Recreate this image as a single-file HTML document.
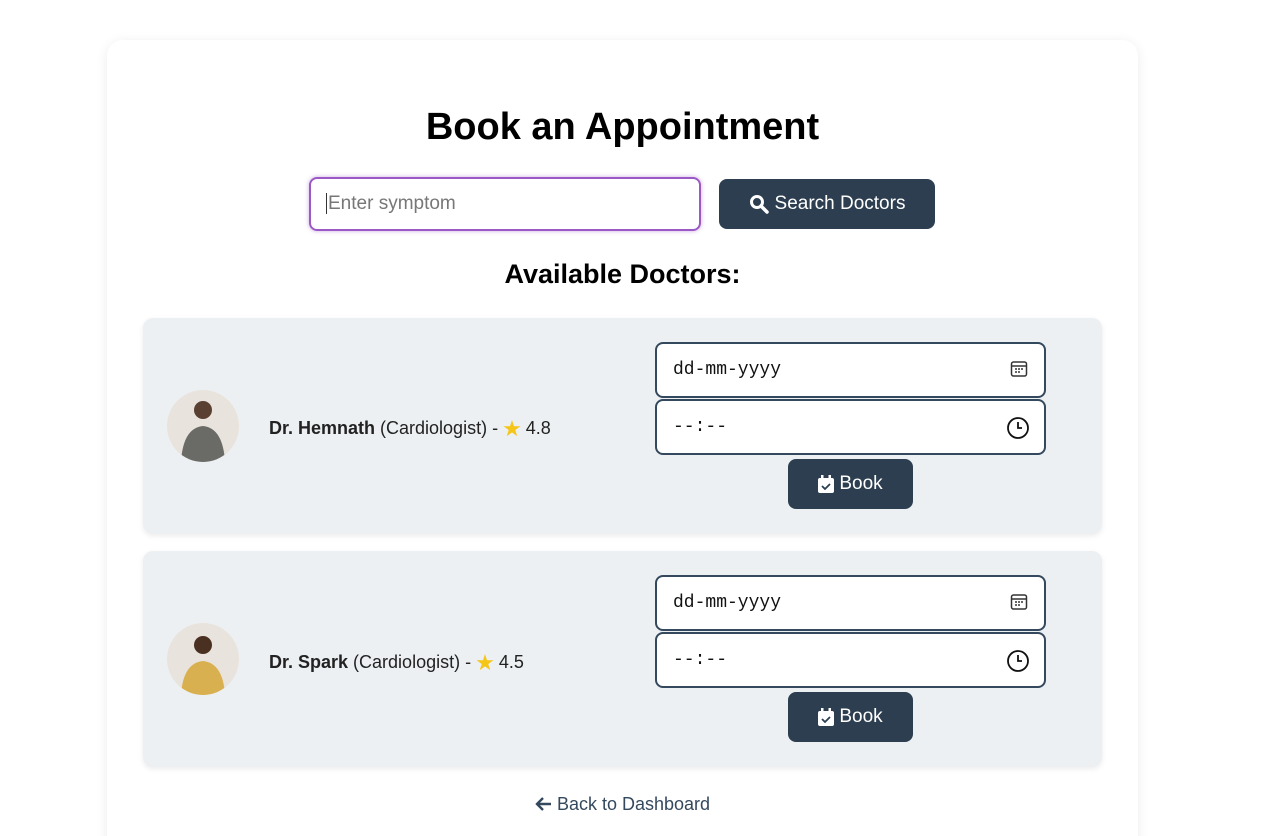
<!DOCTYPE html>
<html style="overflow:hidden;height:836px"><head><style>
body{margin:0;background:#fff;font-family:"Liberation Sans",sans-serif;width:1280px;height:836px;overflow:hidden;position:relative}
.main{position:absolute;left:107px;top:40px;width:1031px;height:830px;background:#fff;border-radius:16px;box-shadow:0 2px 12px rgba(0,0,0,.08)}
.ctr{position:absolute;left:107px;width:1031px;text-align:center;margin:0}
h1{top:106px;font-size:38px;font-weight:bold;color:#000}
.sinput{position:absolute;left:309px;top:177px;border:2px solid #9b59c6;border-radius:8px;box-shadow:0 0 4px rgba(155,89,198,.5);box-sizing:border-box;width:392px;height:54px;font-size:19px;color:#777;padding:14px 15px}
.sbtn{position:absolute;left:719px;top:179px;width:216px;height:50px;background:#2c3e50;border-radius:8px;color:#fff;font-size:19px;display:flex;align-items:center;justify-content:center;gap:6px}
h2{top:259px;font-size:27px;font-weight:bold}
.card{position:absolute;left:143px;width:959px;height:216px;background:#ecf0f2;border-radius:10px;box-shadow:0 2px 6px rgba(0,0,0,.08)}
.av{position:absolute;left:24px;width:72px;height:72px;border-radius:50%;background:#e9e3dd;overflow:hidden}
.name{position:absolute;left:126px;font-size:18px;color:#222}
.star{color:#f5c518;font-size:22px;vertical-align:-2px;margin:0 4px}
.inp{position:absolute;left:512px;width:391px;height:56px;background:#fff;border:2px solid #34495e;border-radius:8px;box-sizing:border-box;font-family:"Liberation Mono",monospace;font-size:18px;padding:16px 16px;color:#111}
.inp svg{position:absolute;right:16px;top:16px}
.bk{position:absolute;left:645px;width:125px;height:50px;background:#2c3e50;border-radius:8px;color:#fff;font-size:19px;display:flex;align-items:center;justify-content:center;gap:5px}
.back{top:794px;font-size:18px;color:#34495e}
</style></head><body>
<div class="main"></div>
<h1 class="ctr">Book an Appointment</h1>
<div class="sinput"><span style="border-left:1px solid #333;padding-left:1px">Enter symptom</span></div>
<div class="sbtn"><svg width="20" height="20" viewBox="0 0 20 20"><circle cx="8" cy="8" r="5.5" fill="none" stroke="#fff" stroke-width="3"/><path d="M12 12l6 6" stroke="#fff" stroke-width="3.5" stroke-linecap="round"/></svg>Search Doctors</div>
<h2 class="ctr">Available Doctors:</h2>

<div class="card" style="top:318px">
<div class="av" style="top:72px"><svg width="72" height="72"><circle cx="36" cy="20" r="9" fill="#5a4030"/><path d="M14 72 Q16 38 36 36 Q56 38 58 72Z" fill="#6a6a66"/></svg></div>
<div class="name" style="top:98px"><b>Dr. Hemnath</b> (Cardiologist) -<span class="star">★</span>4.8</div>
<div class="inp" style="top:24px">dd-mm-yyyy<svg width="18" height="18" viewBox="0 0 18 18"><rect x="1.5" y="2" width="15" height="14" rx="2" fill="none" stroke="#333" stroke-width="1.5"/><path d="M2 6h14" stroke="#333" stroke-width="1.5"/><path d="M5 9h2M8 9h2M11 9h2M5 12h2M8 12h2" stroke="#333" stroke-width="1.5"/></svg></div>
<div class="inp" style="top:81px">--:--<svg width="24" height="24" viewBox="0 0 24 24" style="top:15px;right:14px"><circle cx="12" cy="12" r="10" fill="none" stroke="#111" stroke-width="1.8"/><path d="M12 6v6h4" fill="none" stroke="#111" stroke-width="1.8"/></svg></div>
<div class="bk" style="top:141px"><svg width="16" height="18" viewBox="0 0 16 18"><rect x="0" y="3" width="16" height="15" rx="2" fill="#fff"/><rect x="3" y="0" width="2.5" height="5" fill="#fff"/><rect x="10.5" y="0" width="2.5" height="5" fill="#fff"/><path d="M4 11l3 3 5-5" stroke="#2c3e50" stroke-width="1.8" fill="none"/></svg>Book</div>
</div>

<div class="card" style="top:551px">
<div class="av" style="top:72px"><svg width="72" height="72"><circle cx="36" cy="22" r="9" fill="#4a3020"/><path d="M14 72 Q16 40 36 38 Q56 40 58 72Z" fill="#d9b050"/></svg></div>
<div class="name" style="top:99px"><b>Dr. Spark</b> (Cardiologist) -<span class="star">★</span>4.5</div>
<div class="inp" style="top:24px">dd-mm-yyyy<svg width="18" height="18" viewBox="0 0 18 18"><rect x="1.5" y="2" width="15" height="14" rx="2" fill="none" stroke="#333" stroke-width="1.5"/><path d="M2 6h14" stroke="#333" stroke-width="1.5"/><path d="M5 9h2M8 9h2M11 9h2M5 12h2M8 12h2" stroke="#333" stroke-width="1.5"/></svg></div>
<div class="inp" style="top:81px">--:--<svg width="24" height="24" viewBox="0 0 24 24" style="top:15px;right:14px"><circle cx="12" cy="12" r="10" fill="none" stroke="#111" stroke-width="1.8"/><path d="M12 6v6h4" fill="none" stroke="#111" stroke-width="1.8"/></svg></div>
<div class="bk" style="top:141px"><svg width="16" height="18" viewBox="0 0 16 18"><rect x="0" y="3" width="16" height="15" rx="2" fill="#fff"/><rect x="3" y="0" width="2.5" height="5" fill="#fff"/><rect x="10.5" y="0" width="2.5" height="5" fill="#fff"/><path d="M4 11l3 3 5-5" stroke="#2c3e50" stroke-width="1.8" fill="none"/></svg>Book</div>
</div>

<div class="ctr back"><svg width="18" height="16" viewBox="0 0 18 16" style="vertical-align:-2px;margin-right:4px"><path d="M16 8H3M8 2L2 8l6 6" fill="none" stroke="#34495e" stroke-width="2.4"/></svg>Back to Dashboard</div>
</body></html>
